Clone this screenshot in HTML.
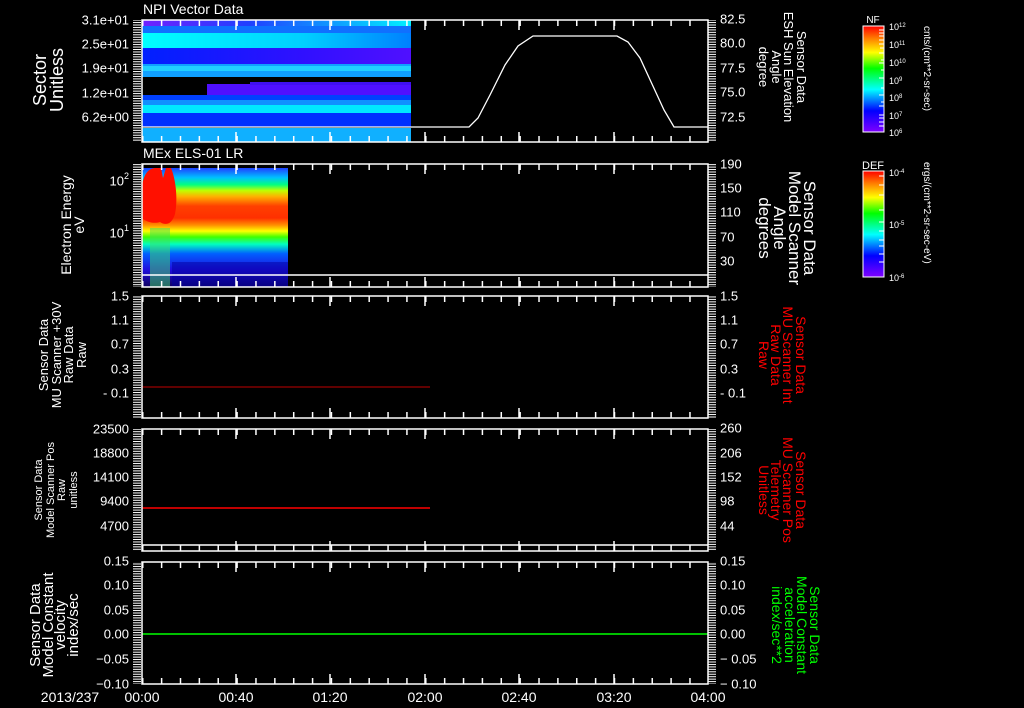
<!DOCTYPE html>
<html><head><meta charset="utf-8"><style>
html,body{margin:0;padding:0;background:#000;}
svg{display:block;}
text{font-family:"Liberation Sans",sans-serif;}
</style></head><body>
<svg width="1024" height="708" viewBox="0 0 1024 708" xmlns="http://www.w3.org/2000/svg" fill="#fff">
<defs>
<pattern id="mxt" x="142" y="0" width="18.87" height="708" patternUnits="userSpaceOnUse"><rect x="0" y="0" width="1.5" height="708" fill="#fff"/></pattern>
<pattern id="yt" x="0" y="0" width="10" height="2.45" patternUnits="userSpaceOnUse"><rect x="0" y="0" width="10" height="1" fill="#fff"/></pattern>
<linearGradient id="nf" x1="0" y1="1" x2="0" y2="0"><stop offset="0" stop-color="#8000ff"/><stop offset="0.2" stop-color="#0000ff"/><stop offset="0.4" stop-color="#00ffff"/><stop offset="0.6" stop-color="#00ff00"/><stop offset="0.75" stop-color="#ffff00"/><stop offset="0.88" stop-color="#ff8000"/><stop offset="1" stop-color="#ff0000"/></linearGradient>
<linearGradient id="els" x1="0" y1="0" x2="0" y2="1">
<stop offset="0" stop-color="#2040ff"/><stop offset="0.08" stop-color="#00c0ff"/><stop offset="0.14" stop-color="#00ff80"/><stop offset="0.19" stop-color="#c0ff00"/><stop offset="0.24" stop-color="#ffb000"/><stop offset="0.32" stop-color="#ff4000"/><stop offset="0.42" stop-color="#ff3000"/><stop offset="0.48" stop-color="#ff9000"/><stop offset="0.53" stop-color="#ffff00"/><stop offset="0.58" stop-color="#40ff00"/><stop offset="0.64" stop-color="#00ffc0"/><stop offset="0.72" stop-color="#0060ff"/><stop offset="0.85" stop-color="#2010e0"/><stop offset="1" stop-color="#100060"/></linearGradient>
<linearGradient id="h1" x1="0" x2="1"><stop offset="0" stop-color="#7020ff"/><stop offset="0.4" stop-color="#2040ff"/><stop offset="1" stop-color="#00f0ff"/></linearGradient>
<linearGradient id="h2" x1="0" x2="1"><stop offset="0" stop-color="#00ffff"/><stop offset="0.6" stop-color="#00d0ff"/><stop offset="1" stop-color="#0080ff"/></linearGradient>
<linearGradient id="h3" x1="0" x2="1"><stop offset="0" stop-color="#0020ff"/><stop offset="0.6" stop-color="#3010ff"/><stop offset="1" stop-color="#5010ff"/></linearGradient>
</defs>

<rect x="142" y="20" width="269" height="6" fill="url(#h1)"/>
<rect x="142" y="26" width="269" height="7" fill="#1070ff"/>
<rect x="142" y="33" width="269" height="15" fill="url(#h2)"/>
<rect x="142" y="48" width="269" height="16" fill="url(#h3)"/>
<rect x="142" y="64" width="269" height="13" fill="#10a0ff"/>
<rect x="142" y="66" width="269" height="5" fill="#20d0ff"/>
<rect x="207" y="84" width="204" height="11" fill="#5010ff"/>
<rect x="250" y="82" width="161" height="3" fill="#4010f0"/>
<rect x="142" y="95" width="269" height="5" fill="#0040ff"/>
<rect x="142" y="100" width="269" height="5" fill="#1090ff"/>
<rect x="142" y="105" width="269" height="8" fill="#00e8ff"/>
<rect x="142" y="113" width="269" height="14" fill="#0030ff"/>
<rect x="142" y="128" width="269" height="14" fill="#10b0ff"/>
<polyline points="142,127 469,127 478,118 490,95 505,65 518,46 533,36 617,36 628,42 640,58 652,84 664,110 674,127 708,127" fill="none" stroke="#fff" stroke-width="1.3"/>

<rect x="142" y="168" width="146" height="119" fill="url(#els)"/>
<path d="M142,186 C144,172 150,168 156,168 L161,168 L163,178 L166,168 L171,168 C176,180 178,200 175,214 C172,224 166,226 160,222 C154,224 146,222 142,218 Z" fill="#ff1000"/>
<rect x="150" y="228" width="20" height="59" fill="#40e060" opacity="0.5"/>
<rect x="172" y="262" width="116" height="25" fill="#0000a0" opacity="0.5"/>
<line x1="142" y1="275" x2="708" y2="275" stroke="#fff" stroke-width="1.5"/>

<line x1="142" y1="387" x2="430" y2="387" stroke="#c00000" stroke-width="1"/>
<line x1="142" y1="508" x2="430" y2="508" stroke="#ff0000" stroke-width="1.5"/>
<line x1="142" y1="634" x2="708" y2="634" stroke="#00ff00" stroke-width="1.5"/>
<line x1="142" y1="545" x2="708" y2="545" stroke="#fff" stroke-width="1.5"/>

<g fill="none" stroke="#fff" stroke-width="1.5">
<rect x="142" y="20" width="566" height="122"/>
<rect x="142" y="164" width="566" height="123"/>
<rect x="142" y="296" width="566" height="122"/>
<rect x="142" y="429" width="566" height="122"/>
<rect x="142" y="562" width="566" height="122"/>
</g>
<g fill="url(#mxt)">
<rect x="142" y="20" width="566" height="6"/><rect x="142" y="136" width="566" height="6"/>
<rect x="142" y="164" width="566" height="6"/><rect x="142" y="281" width="566" height="6"/>
<rect x="142" y="296" width="566" height="6"/><rect x="142" y="412" width="566" height="6"/>
<rect x="142" y="429" width="566" height="6"/><rect x="142" y="545" width="566" height="6"/>
<rect x="142" y="562" width="566" height="6"/><rect x="142" y="678" width="566" height="6"/>
</g>
<g stroke="#fff" stroke-width="1.5">
<path d="M236,20v10M330,20v10M425,20v10M519,20v10M614,20v10M236,142v-10M330,142v-10M425,142v-10M519,142v-10M614,142v-10"/>
<path d="M236,164v10M330,164v10M425,164v10M519,164v10M614,164v10M236,287v-10M330,287v-10M425,287v-10M519,287v-10M614,287v-10"/>
<path d="M236,296v10M330,296v10M425,296v10M519,296v10M614,296v10M236,418v-10M330,418v-10M425,418v-10M519,418v-10M614,418v-10"/>
<path d="M236,429v10M330,429v10M425,429v10M519,429v10M614,429v10M236,551v-10M330,551v-10M425,551v-10M519,551v-10M614,551v-10"/>
<path d="M236,562v10M330,562v10M425,562v10M519,562v10M614,562v10M236,684v-10M330,684v-10M425,684v-10M519,684v-10M614,684v-10"/>
</g>
<g fill="url(#yt)">
<rect x="133" y="20" width="8" height="122"/><rect x="708" y="20" width="8" height="122"/>
<rect x="133" y="164" width="8" height="123"/><rect x="708" y="164" width="8" height="123"/>
<rect x="133" y="296" width="8" height="122"/><rect x="708" y="296" width="8" height="122"/>
<rect x="133" y="429" width="8" height="122"/><rect x="708" y="429" width="8" height="122"/>
<rect x="133" y="562" width="8" height="122"/><rect x="708" y="562" width="8" height="122"/>
</g>

<text x="143" y="14" font-size="14" fill="#fff">NPI Vector Data</text>
<text x="143" y="158" font-size="14" fill="#fff">MEx ELS-01 LR</text>

<g font-size="13" text-anchor="end" dominant-baseline="central" fill="#fff">
<text x="129" y="20">3.1e+01</text><text x="129" y="44">2.5e+01</text><text x="129" y="68">1.9e+01</text><text x="129" y="93">1.2e+01</text><text x="129" y="117">6.2e+00</text>
<text x="129" y="181">10<tspan font-size="9" dy="-5">2</tspan></text><text x="129" y="233">10<tspan font-size="9" dy="-5">1</tspan></text>
<text x="129" y="296">1.5</text><text x="129" y="320">1.1</text><text x="129" y="344">0.7</text><text x="129" y="369">0.3</text><text x="129" y="393">- 0.1</text>
<text x="129" y="429">23500</text><text x="129" y="453">18800</text><text x="129" y="477">14100</text><text x="129" y="501">9400</text><text x="129" y="526">4700</text>
<text x="129" y="561">0.15</text><text x="129" y="585">0.10</text><text x="129" y="610">0.05</text><text x="129" y="634">0.00</text><text x="129" y="659">−0.05</text><text x="129" y="684">−0.10</text>
</g>
<g font-size="13" dominant-baseline="central" fill="#fff">
<text x="720" y="19">82.5</text><text x="720" y="43">80.0</text><text x="720" y="68">77.5</text><text x="720" y="92">75.0</text><text x="720" y="117">72.5</text>
<text x="720" y="164">190</text><text x="720" y="188">150</text><text x="720" y="212">110</text><text x="720" y="237">70</text><text x="720" y="261">30</text>
<text x="720" y="296">1.5</text><text x="720" y="320">1.1</text><text x="720" y="344">0.7</text><text x="720" y="369">0.3</text><text x="720" y="393">- 0.1</text>
<text x="720" y="428">260</text><text x="720" y="453">206</text><text x="720" y="477">152</text><text x="720" y="501">98</text><text x="720" y="526">44</text>
<text x="720" y="561">0.15</text><text x="720" y="585">0.10</text><text x="720" y="610">0.05</text><text x="720" y="634">0.00</text><text x="720" y="659">− 0.05</text><text x="720" y="684">− 0.10</text>
</g>

<g font-size="14" text-anchor="middle" fill="#fff">
<text x="70" y="702">2013/237</text>
<text x="142" y="702">00:00</text><text x="236" y="702">00:40</text><text x="330" y="702">01:20</text><text x="425" y="702">02:00</text><text x="519" y="702">02:40</text><text x="614" y="702">03:20</text><text x="708" y="702">04:00</text>
</g>

<g text-anchor="middle" fill="#fff">
<g transform="translate(0,80) rotate(-90)" font-size="18"><text x="0" y="46">Sector</text><text x="0" y="63">Unitless</text></g>
<g transform="translate(0,225) rotate(-90)" font-size="14"><text x="0" y="71">Electron Energy</text><text x="0" y="84">eV</text></g>
<g transform="translate(0,355) rotate(-90)" font-size="13"><text x="0" y="48">Sensor Data</text><text x="0" y="61">MU Scanner +30V</text><text x="0" y="73">Raw Data</text><text x="0" y="86">Raw</text></g>
<g transform="translate(0,490) rotate(-90)" font-size="11"><text x="0" y="42">Sensor Data</text><text x="0" y="54">Model Scanner Pos</text><text x="0" y="65">Raw</text><text x="0" y="77">unitless</text></g>
<g transform="translate(0,625) rotate(-90)" font-size="15"><text x="0" y="40">Sensor Data</text><text x="0" y="53">Model Constant</text><text x="0" y="65">velocity</text><text x="0" y="78">index/sec</text></g>
</g>
<g text-anchor="middle">
<g transform="translate(0,67) rotate(90)" font-size="13" fill="#fff"><text x="0" y="-797">Sensor Data</text><text x="0" y="-784">ESH Sun Elevation</text><text x="0" y="-772">Angle</text><text x="0" y="-759">degree</text></g>
<g transform="translate(0,228) rotate(90)" font-size="17" fill="#fff"><text x="0" y="-804">Sensor Data</text><text x="0" y="-789">Model Scanner</text><text x="0" y="-774">Angle</text><text x="0" y="-759">degrees</text></g>
<g transform="translate(0,355) rotate(90)" font-size="14" fill="#ff0000"><text x="0" y="-796">Sensor Data</text><text x="0" y="-783">MU Scanner Int</text><text x="0" y="-771">Raw Data</text><text x="0" y="-759">Raw</text></g>
<g transform="translate(0,490) rotate(90)" font-size="14" fill="#ff0000"><text x="0" y="-796">Sensor Data</text><text x="0" y="-783">MU Scanner Pos</text><text x="0" y="-771">Telemetry</text><text x="0" y="-759">Unitless</text></g>
<g transform="translate(0,625) rotate(90)" font-size="14" fill="#00ff00"><text x="0" y="-810">Sensor Data</text><text x="0" y="-797">Model Constant</text><text x="0" y="-785">acceleration</text><text x="0" y="-772">index/sec**2</text></g>
</g>

<rect x="863" y="26" width="21" height="106" fill="url(#nf)" stroke="#fff" stroke-width="1"/>
<rect x="863" y="171" width="21" height="106" fill="url(#nf)" stroke="#fff" stroke-width="1"/>
<g stroke="#fff" stroke-width="1">
<path d="M879,30h5M879,33h5M879,36h5M879,40h5M879,44h5M880,48h4M879,53h5M881,60h3M879,63h5M881,70h3M879,78h5M881,88h3M879,95h5M881,102h3M879,106h5M879,115h5M879,118h5M879,122h5M879,126h5"/>
<path d="M879,176h5M879,185h5M879,195h5M879,210h5M879,222h5M879,231h5M879,240h5M879,246h5M879,254h5M879,262h5"/>
</g>
<g fill="#fff">
<text x="873" y="23" font-size="10" text-anchor="middle">NF</text>
<text x="873" y="169" font-size="11" text-anchor="middle">DEF</text>
<g font-size="9">
<text x="889" y="30">10<tspan font-size="6" dy="-3">12</tspan></text><text x="889" y="48">10<tspan font-size="6" dy="-3">11</tspan></text><text x="889" y="66">10<tspan font-size="6" dy="-3">10</tspan></text><text x="889" y="84">10<tspan font-size="6" dy="-3">9</tspan></text><text x="889" y="101">10<tspan font-size="6" dy="-3">8</tspan></text><text x="889" y="119">10<tspan font-size="6" dy="-3">7</tspan></text><text x="889" y="136">10<tspan font-size="6" dy="-3">6</tspan></text>
<text x="889" y="176">10<tspan font-size="6" dy="-3">-4</tspan></text><text x="889" y="228">10<tspan font-size="6" dy="-3">-5</tspan></text><text x="889" y="281">10<tspan font-size="6" dy="-3">-6</tspan></text>
</g>
<g font-size="10">
<text transform="translate(924,26) rotate(90)" x="0" y="0">cnts/(cm**2-sr-sec)</text>
<text transform="translate(924,162) rotate(90)" x="0" y="0">ergs/(cm**2-sr-sec-eV)</text>
</g>
</g>
</svg>
</body></html>
